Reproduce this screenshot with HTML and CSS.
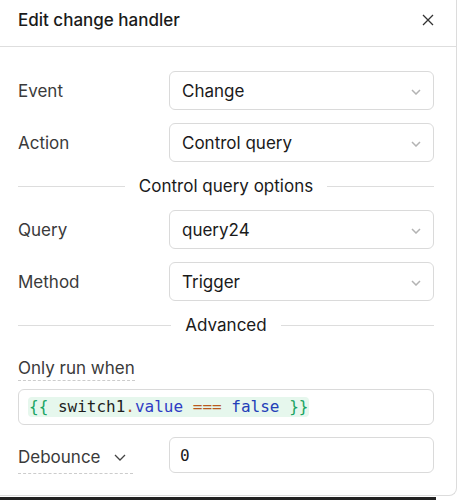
FILE: index.html
```html
<!DOCTYPE html>
<html>
<head>
  <meta charset="UTF-8">
  <title>Edit change handler</title>
  <link rel="stylesheet" href="styles.css">
</head>
<body>
  <div class="panel">
    <div class="header">
      <span class="title">Edit change handler</span>
      <svg class="close" width="14" height="14" viewBox="0 0 14 14"><path d="M2 2 L12 12 M12 2 L2 12" stroke="#333" stroke-width="1.3" fill="none"/></svg>
    </div>

    <div class="body">
      <div class="row">
        <span class="label">Event</span>
        <div class="select">Change<svg class="chev" width="10" height="6" viewBox="0 0 10 6"><path d="M1 1 L5 5 L9 1" stroke="#b3b3b3" stroke-width="1.5" fill="none"/></svg></div>
      </div>
      <div class="row">
        <span class="label">Action</span>
        <div class="select">Control query<svg class="chev" width="10" height="6" viewBox="0 0 10 6"><path d="M1 1 L5 5 L9 1" stroke="#b3b3b3" stroke-width="1.5" fill="none"/></svg></div>
      </div>

      <div class="divider"><span>Control query options</span></div>

      <div class="row">
        <span class="label">Query</span>
        <div class="select">query24<svg class="chev" width="10" height="6" viewBox="0 0 10 6"><path d="M1 1 L5 5 L9 1" stroke="#b3b3b3" stroke-width="1.5" fill="none"/></svg></div>
      </div>
      <div class="row">
        <span class="label">Method</span>
        <div class="select">Trigger<svg class="chev" width="10" height="6" viewBox="0 0 10 6"><path d="M1 1 L5 5 L9 1" stroke="#b3b3b3" stroke-width="1.5" fill="none"/></svg></div>
      </div>

      <div class="divider adv"><span>Advanced</span></div>

      <div class="only-run">
        <span class="label dashed">Only run when</span>
      </div>
      <div class="code-box">
        <span class="code"><span class="c-brace">{{</span> switch1<span class="c-op">.</span><span class="c-prop">value</span> <span class="c-op">===</span> <span class="c-kw">false</span> <span class="c-brace">}}</span></span>
      </div>

      <div class="row debounce">
        <span class="label dashed">Debounce<svg class="dchev" width="12" height="7" viewBox="0 0 12 7"><path d="M1 1 L6 6 L11 1" stroke="#444" stroke-width="1.3" fill="none"/></svg></span>
        <div class="input">0</div>
      </div>
    </div>
  </div>
  <div class="backdrop"></div>
</body>
</html>
```

FILE: styles.css
```css
body {
  margin: 0;
  background-color: #ffffff;
  font-family: Inter, "Noto Sans", sans-serif;
  color: #1f1f1f;
  width: 460px;
  height: 500px;
  overflow: hidden;
}

.panel {
  width: 457px;
  height: 496px;
  border-right: 1px solid #dcdcdc;
  border-bottom: 1px solid #dcdcdc;
  border-bottom-right-radius: 8px;
  box-sizing: border-box;
}

.header {
  height: 47px;
  border-bottom: 1px solid #dedede;
  display: flex;
  align-items: center;
  justify-content: space-between;
  padding: 0 21px 6px 18px;
  box-sizing: border-box;
}

.title {
  font-size: 17px;
  font-weight: 500;
  color: #1a1a1a;
}

.body {
  padding: 24px 22px 0 18px;
}

.row {
  display: flex;
  align-items: center;
  height: 39px;
  margin-bottom: 13px;
}

.label {
  width: 151px;
  font-size: 17px;
  color: #3a3a3a;
  flex-shrink: 0;
}

.select, .input {
  flex: 1;
  height: 39px;
  border: 1px solid #dadada;
  border-radius: 6px;
  box-sizing: border-box;
  display: flex;
  align-items: center;
  justify-content: space-between;
  padding: 0 12px 0 12px;
  font-size: 17px;
  color: #1a1a1a;
}

.chev {
  margin-top: 2px;
}

.divider {
  display: flex;
  align-items: center;
  gap: 14px;
  font-size: 17px;
  color: #1a1a1a;
  height: 22px;
  margin: 0 0 13px;
}

.divider::before, .divider::after {
  content: "";
  flex: 1;
  height: 1px;
  background-color: #dddddd;
}

.divider.adv {
  margin: 10px 0 22px;
}

.only-run {
  height: 22px;
  margin-bottom: 9px;
}

.dashed {
  width: auto;
  border-bottom: 1px dashed #cccccc;
  padding-bottom: 2px;
  color: #3a3a3a;
}

.code-box {
  height: 36px;
  border: 1px solid #dadada;
  border-radius: 6px;
  box-sizing: border-box;
  display: flex;
  align-items: center;
  padding: 0 9px;
  margin-bottom: 12px;
}

.code {
  font-family: "DejaVu Sans Mono", monospace;
  font-size: 16px;
  background-color: #e6f7ed;
  border-radius: 4px;
  padding: 0 1px;
  line-height: 20px;
  color: #1e1e1e;
}

.c-brace { color: #19a463; }
.c-op { color: #b85a20; }
.c-prop { color: #2f3cc4; }
.c-kw { color: #2340b8; }

.debounce {
  height: 36px;
}

.debounce .label {
  width: 115px;
  margin-right: 36px;
  padding-bottom: 6px;
  margin-top: 10px;
}

.dchev {
  margin-left: 13px;
  vertical-align: middle;
}

.input {
  height: 36px;
  font-family: "DejaVu Sans Mono", monospace;
  font-size: 16px;
  padding-left: 10px;
}

.backdrop {
  width: 436px;
  height: 3px;
  background-color: #222222;
  margin-top: 1px;
}
```
